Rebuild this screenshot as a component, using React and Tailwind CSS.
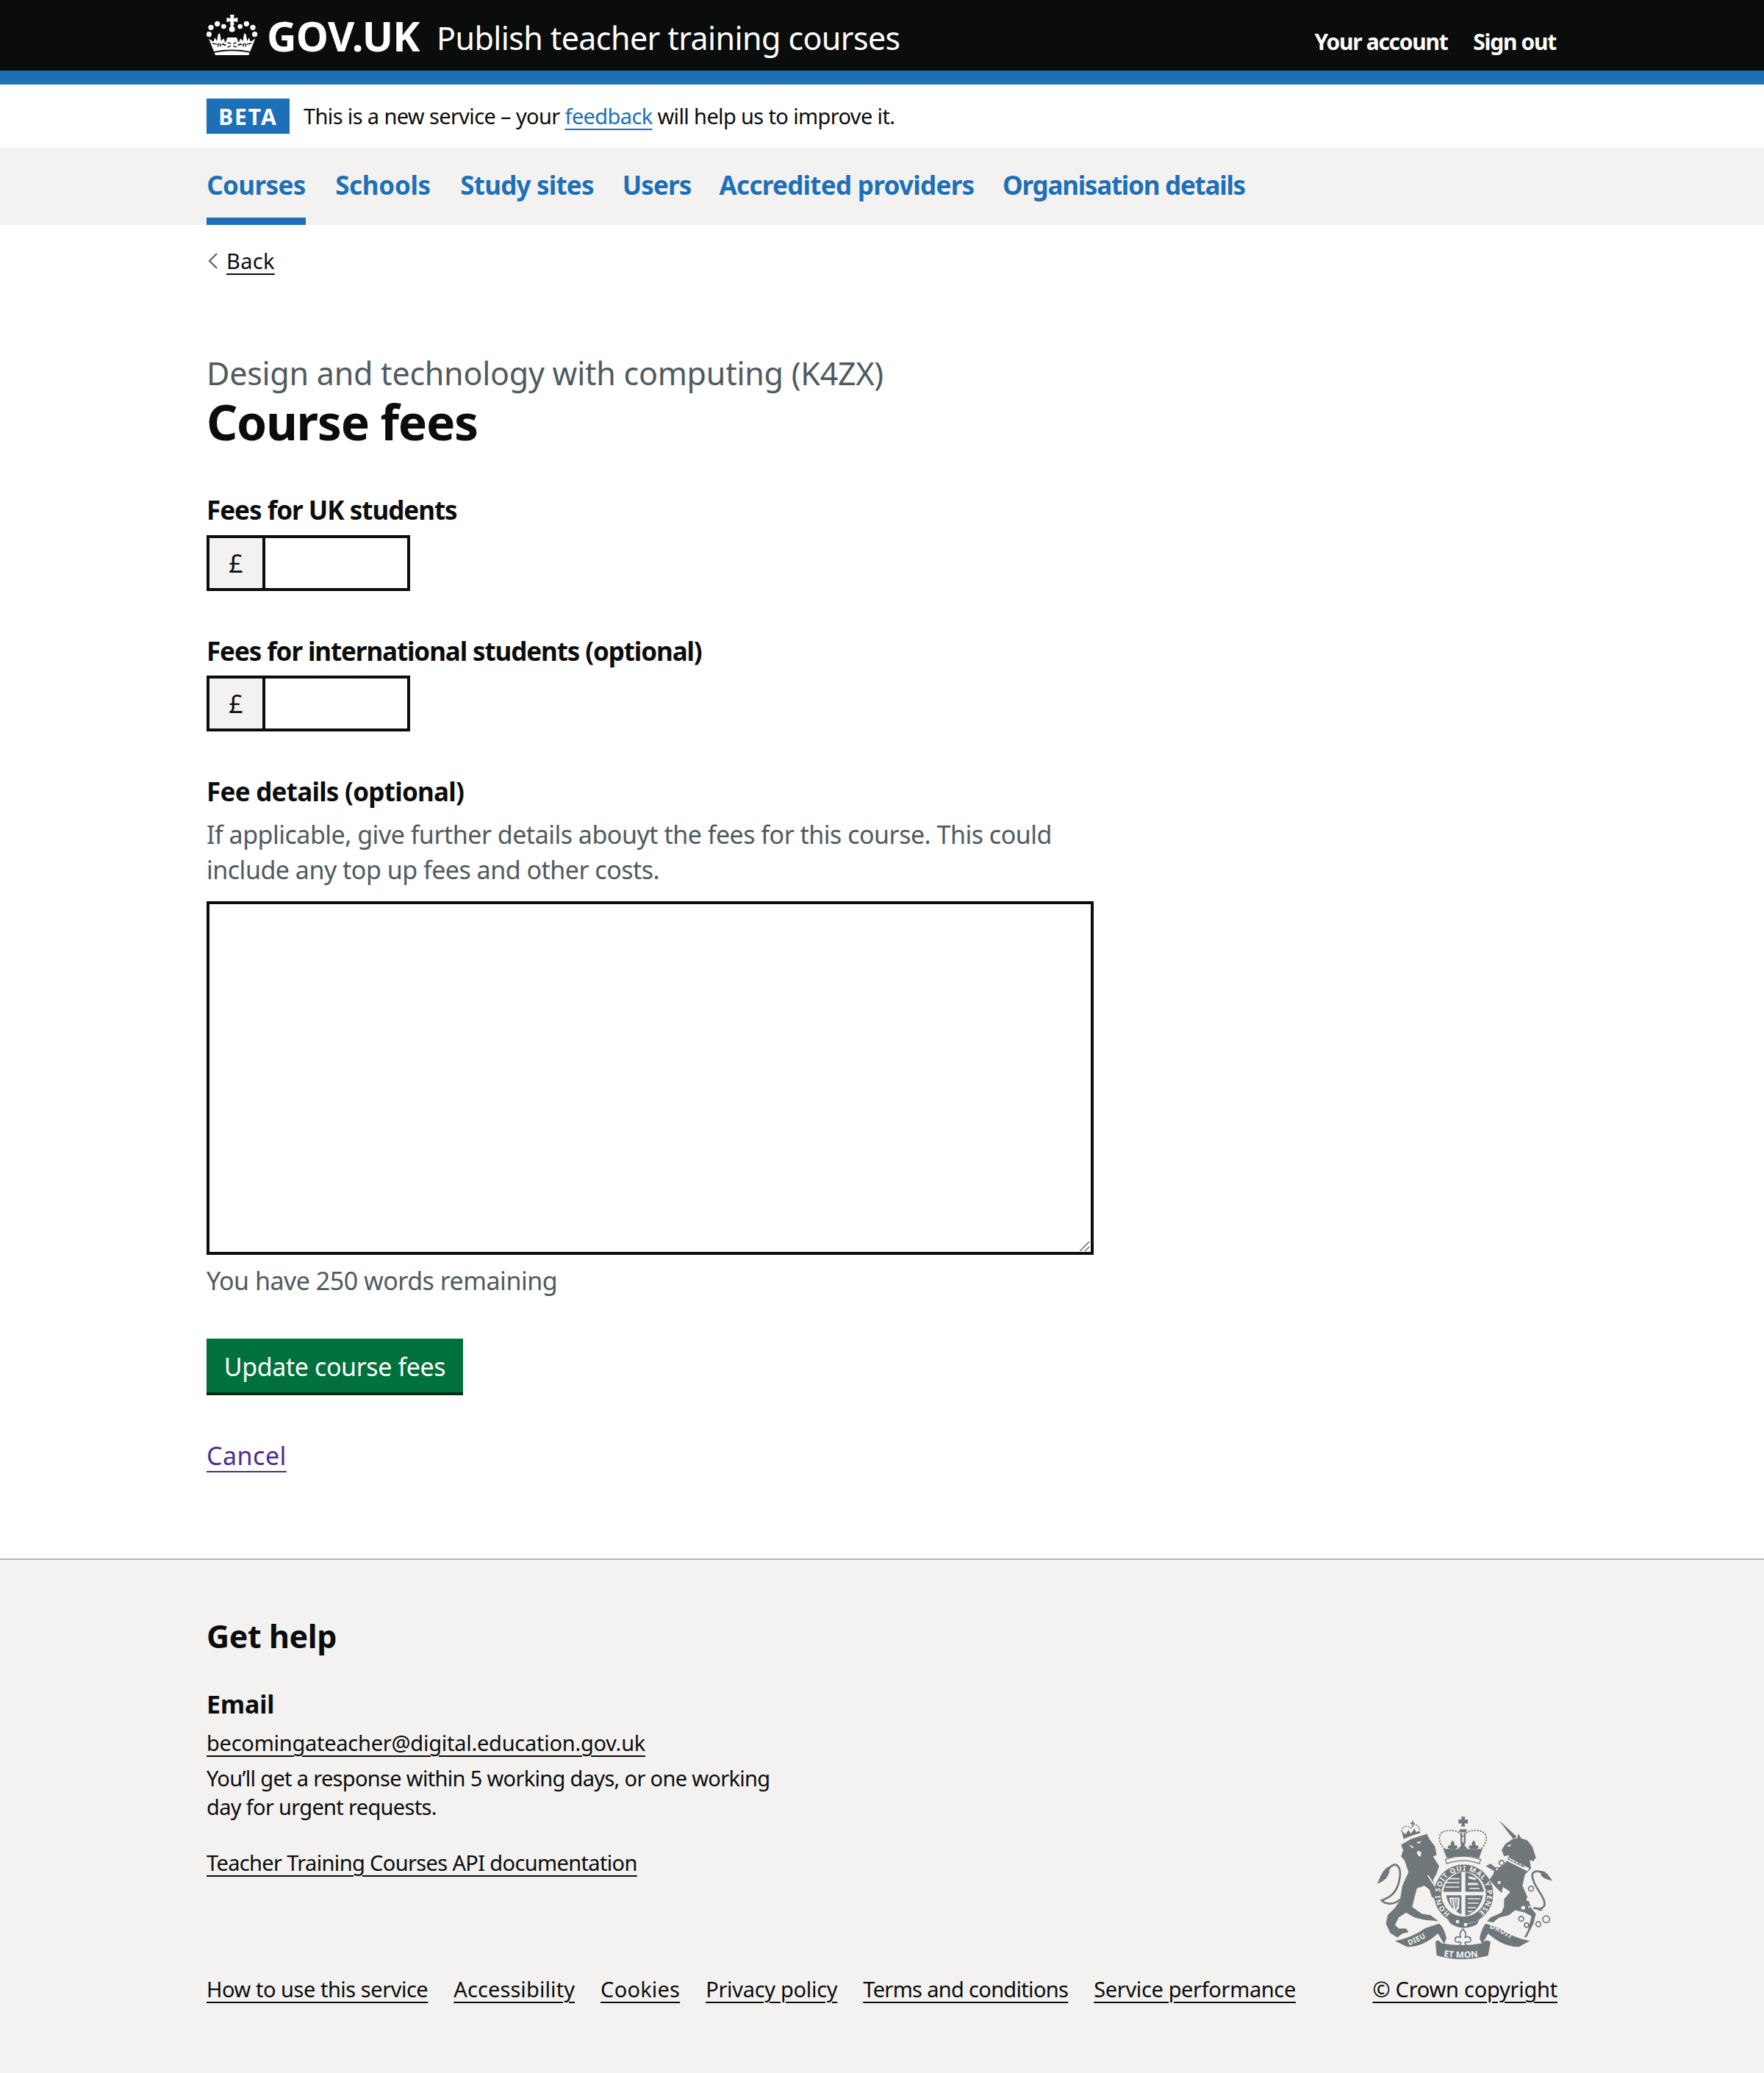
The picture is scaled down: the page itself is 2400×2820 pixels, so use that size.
import React from "react";

const navItems = [
  { label: "Courses", cls: "w-[135px] tracking-[-0.6px]", active: true },
  { label: "Schools", cls: "w-[132px] tracking-[-0.3px]" },
  { label: "Study sites", cls: "w-[182px] tracking-[-0.8px]" },
  { label: "Users", cls: "w-[93px] tracking-[-0.9px]" },
  { label: "Accredited providers", cls: "w-[346px] tracking-[-0.7px]" },
  { label: "Organisation details", cls: "w-[330px] tracking-[-1.25px]" },
];

const footerLinks = [
  { label: "How to use this service", cls: "tracking-[-0.47px]" },
  { label: "Accessibility", cls: "tracking-[0.1px]" },
  { label: "Cookies", cls: "tracking-[0.2px]" },
  { label: "Privacy policy", cls: "tracking-[-0.3px]" },
  { label: "Terms and conditions", cls: "tracking-[-0.68px]" },
  { label: "Service performance", cls: "tracking-[-0.36px]" },
];

function CrownLogo() {
  return (
    <svg viewBox="18 15 207 165" className="w-[69px] h-[55px] fill-white" aria-hidden="true">
      <path d="M114 15h17l-2 15 16-3v18l-16-3 2 16h-17l2-16-16 3V27l16 3z" />
      <path d="M122 54c7 8 12 15 12 22 0 6-5 10-12 10s-12-4-12-10c0-7 5-14 12-22z" />
      <circle cx="88" cy="63" r="10" />
      <circle cx="62" cy="52" r="11" />
      <circle cx="36" cy="67" r="11" />
      <circle cx="28" cy="95" r="11" />
      <circle cx="155" cy="63" r="10" />
      <circle cx="181" cy="52" r="11" />
      <circle cx="207" cy="67" r="11" />
      <circle cx="215" cy="95" r="11" />
      <path d="M27 112c8 6 15 12 20 12l5-16 8 14 5-27 7-5 6 32 10-10 7 18 8-22h38l8 22 7-18 10 10 6-32 7 5 5 27 8-14 5 16c5 0 12-6 20-12l-21 53c-46-10-101-10-148 0z" />
      <path d="M50 170c45-10 100-10 144 0l-4 10H54z" />
      <g stroke="#0b0c0c" strokeWidth="4" fill="none">
        <path d="M42 132l20 4M64 146l4-14M76 146l-4-14M86 132l8 10M78 136l20 2" />
        <path d="M201 132l-20 4M179 146l-4-14M167 146l4-14M157 132l-8 10M165 136l-20 2" />
        <path d="M104 128l13 6M140 128l-13 6M104 148l13-6M140 148l-13-6" />
      </g>
    </svg>
  );
}

function RoyalCrest() {
  return (
    <svg viewBox="100 90 720 590" className="w-[240px] h-[197px] fill-[#6f777b]" aria-hidden="true">
      <defs>
        <path id="garter" d="M400 489A96 96 0 1 1 510 489" />
        <path id="scroll-left" d="M232 618Q285 600 332 566" />
        <path id="scroll-mid" d="M366 662Q450 678 535 662" />
        <path id="scroll-right" d="M560 548Q625 570 685 622" />
      </defs>

      {/* lion */}
      <g transform="translate(90 90)">
        <path d="M110 118L150 95 215 74 225 95 248 125 255 160 240 165 265 205 255 235 240 262 262 320 255 345 235 330 225 300 205 285 175 295 165 330 155 372 195 400 230 405 262 430 240 428 205 425 165 415 130 395 100 415 85 445 100 460 130 460 140 475 115 480 95 497 65 478 48 440 55 405 85 375 105 345 115 285 140 230 125 185 110 165 118 140z" />
        <path d="M105 340C85 365 45 362 30 345 60 335 85 320 98 280 108 245 112 210 88 200 75 197 62 210 55 225" fill="none" stroke="#6f777b" strokeWidth="8" />
        <path d="M65 205C35 215 25 250 12 278 30 270 50 262 60 235z" />
        <path d="M120 95L112 62 128 75 140 58 150 72 165 52 172 68 184 60 188 70C165 76 140 85 120 95z" />
        <path d="M112 62C113 42 130 38 146 48M150 50C158 30 182 30 186 62" fill="none" stroke="#6f777b" strokeWidth="6" strokeLinecap="round" strokeDasharray="0 10" />
        <path d="M148 28h6v-8h5v8h7v5h-7v12h-5V33h-6z" />
        <path d="M140 118l22 8-6 6z" fill="#f3f2f1" />
        <path d="M172 108l22-6-12 12z" fill="#f3f2f1" />
        <path d="M178 142l14 6-2 18-10-2-6-14z" fill="#f3f2f1" />
        <path d="M220 240l60 88-5 3-58-86z" fill="#f3f2f1" />
      </g>

      {/* unicorn */}
      <g transform="translate(450 90)">
        <path d="M147 16L222 85 208 95z" />
        <path d="M160 140L175 115 205 95 225 90 228 72 240 92 265 100 285 125 300 170 290 185 275 180 280 215 255 240 245 285 265 330 280 375 300 400 290 440 262 495 252 497 268 465 282 410 255 395 215 385 190 405 150 415 125 435 100 430 115 415 160 395 170 370 170 340 195 310 165 290 160 315 135 290 110 260 125 240 130 225 95 205 115 195 140 215 170 200 185 175 190 160 170 165z" />
        <path d="M290 375C320 385 345 375 332 342 315 305 285 275 285 240 288 225 310 222 322 232" fill="none" stroke="#6f777b" strokeWidth="8" />
        <path d="M318 224C345 225 355 250 368 265 350 262 335 258 322 245z" />
        <path d="M300 372l30 14-18 2z" />
        <path d="M185 168l88 46-8 12-88-44z" fill="#f3f2f1" />
        <path d="M190 172l6 12 6-6 6 12 8-6 6 12 8-6 6 12 8-5 6 10 6-4-4 8-70-34z" />
        <path d="M182 122l18-6-8 10z" fill="#f3f2f1" />
        <g fill="#f3f2f1" stroke="#6f777b" strokeWidth="5">
          <circle cx="160" cy="192" r="10" />
          <circle cx="141" cy="218" r="7" />
          <circle cx="150" cy="272" r="9" />
          <circle cx="280" cy="297" r="10" />
        </g>
        <g fill="#f3f2f1">
          <circle cx="268" cy="341" r="7" />
          <circle cx="248" cy="375" r="8" />
          <circle cx="272" cy="372" r="4" />
        </g>
        <g fill="none" stroke="#6f777b" strokeWidth="5">
          <circle cx="240" cy="420" r="10" />
          <circle cx="262" cy="446" r="9" />
          <circle cx="310" cy="442" r="10" />
          <circle cx="342" cy="422" r="14" />
        </g>
      </g>

      {/* crown */}
      <path d="M445 93h16l-2 13 13-2v18l-13-2 2 14h-16l2-14-13 2v-18l13 2z" />
      <path d="M385 232C345 200 345 150 395 150 420 148 440 155 452 175 464 155 484 148 509 150 559 150 559 200 519 232" fill="none" stroke="#6f777b" strokeWidth="7" strokeLinecap="round" strokeDasharray="0 12" />
      <path d="M438 145h29v12h-29zM442 160h7v42h-7zM456 160h7v42h-7z" />
      <path d="M372 225h160l-14 37c-44-10-88-10-132 0z" />
      <path d="M410 190c8 8 10 16 6 22 6-4 14-2 14 5 0 6-8 9-14 8h-12c-6 1-14-2-14-8 0-7 8-9 14-5-4-6-2-14 6-22z" />
      <path d="M452 196l10 10-4 4 14 15h-40l14-15-4-4z" />
      <path d="M496 190c8 8 10 16 6 22 6-4 14-2 14 5 0 6-8 9-14 8h-12c-6 1-14-2-14-8 0-7 8-9 14-5-4-6-2-14 6-22z" />
      <path d="M380 268c48-18 96-18 145 0l-6 17c-44-16-88-16-133 0z" fill="#f3f2f1" stroke="#6f777b" strokeWidth="4" />

      {/* garter and shield */}
      <circle cx="455" cy="410" r="106" fill="none" stroke="#6f777b" strokeWidth="30" />
      <circle cx="455" cy="408" r="90" fill="#f3f2f1" />
      <path d="M372 400h74v-80c-40 8-68 38-74 80zM462 320v80h76c-6-42-36-72-76-80zM462 414v84c38-10 66-44 72-84zM384 414c6 38 30 64 62 78v-78z" />
      <g fill="#f3f2f1">
        <path d="M392 344h46v5h-46zM384 360h54v5h-54zM380 378h58v5h-58z" />
        <path d="M474 336l34 8-6 8-26-6zM472 364h40l4 8h-44zM478 384h42v5h-42z" />
        <path d="M472 426h50v5h-50zM472 444h44v5h-44zM472 462h32v5h-32zM472 478h20v5h-20z" />
        <path d="M396 424h42l-2 42-12 16c-14-14-24-32-28-58z" />
      </g>
      <path d="M406 430l6 36M417 428l7 44M428 428l-1 36" stroke="#6f777b" strokeWidth="4" fill="none" />
      <text fontSize="29" fontWeight="700" fill="#f3f2f1" fontFamily="Noto Sans, sans-serif" letterSpacing="0.5">
        <textPath href="#garter" textLength="478">HONI SOIT QUI MAL Y PENSE</textPath>
      </text>
      <path d="M385 500c40 36 100 42 135 10l-10 22c-36 22-82 20-112-6z" />
      <circle cx="430" cy="522" r="7" fill="#f3f2f1" />
      <circle cx="463" cy="534" r="7" fill="#f3f2f1" />

      {/* motto scrolls */}
      <path d="M175 600Q240 590 300 548L355 530Q375 545 385 590L375 612Q362 590 350 570 290 625 225 625z" />
      <path d="M340 605Q350 590 365 610 450 625 530 610 545 590 565 605L555 660Q450 690 345 660z" />
      <path d="M725 600Q660 590 600 548L545 530Q530 545 520 590L530 612Q545 590 555 570 615 625 680 625z" />
      <text fontSize="30" fontWeight="700" fill="#f3f2f1" fontFamily="Noto Sans, sans-serif" letterSpacing="1">
        <textPath href="#scroll-left">DIEU</textPath>
      </text>
      <text fontSize="36" fontWeight="700" fill="#f3f2f1" fontFamily="Noto Sans, sans-serif">
        <textPath href="#scroll-mid" startOffset="4%">ET MON</textPath>
      </text>
      <text fontSize="30" fontWeight="700" fill="#f3f2f1" fontFamily="Noto Sans, sans-serif" letterSpacing="1">
        <textPath href="#scroll-right">DROIT</textPath>
      </text>
      <path d="M452 552c11 10 14 24 8 36 9-8 24-5 24 7 0 10-10 14-16 9l-8 4 6 14h-28l6-14-8-4c-6 5-16 1-16-9 0-12 15-15 24-7-6-12-3-26 8-36z" fill="none" stroke="#6f777b" strokeWidth="5" />
    </svg>
  );
}

function FeeInput() {
  return (
    <div className="flex w-[277px] h-[76px] border-4 border-[#0b0c0c]">
      <div className="w-[76px] shrink-0 bg-[#f3f2f1] border-r-4 border-[#0b0c0c] flex items-center justify-center text-[34px] text-[#0b0c0c]">
        £
      </div>
      <input type="text" className="flex-1 min-w-0 bg-white outline-none" />
    </div>
  );
}

export default function App() {
  return (
    <div className="min-h-[2820px] bg-white font-['Noto_Sans',sans-serif] text-[#0b0c0c]">
      {/* Header */}
      <header className="h-[115px] bg-[#0b0c0c] border-b-[19px] border-[#1d70b8]">
        <div className="w-[1838px] mx-auto h-full flex items-start justify-between text-white">
          <div className="flex items-start pt-[20px]">
            <CrownLogo />
            <span className="ml-[13px] -mt-[7px] w-[209px] text-[56px] leading-[70px] font-bold tracking-[-0.7px] whitespace-nowrap">GOV.UK</span>
            <span className="ml-[22px] mt-[2px] w-[632px] text-[43px] leading-[60px] tracking-[-0.6px] whitespace-nowrap">Publish teacher training courses</span>
          </div>
          <div className="flex gap-[35px] pt-[37px] pr-[2px] text-[30px] leading-[40px] font-bold tracking-[-1.3px]">
            <a href="#">Your account</a>
            <a href="#">Sign out</a>
          </div>
        </div>
      </header>

      {/* Beta banner */}
      <div className="h-[86px] w-[1838px] mx-auto flex items-center">
        <strong className="w-[113px] h-[48px] bg-[#1d70b8] text-white text-[30px] tracking-[2px] font-bold flex items-center justify-center">BETA</strong>
        <p className="ml-[19px] text-[29px] tracking-[-0.63px] leading-[40px]">
          This is a new service – your{" "}
          <a href="#" className="text-[#1d70b8] underline decoration-2 underline-offset-[6px]">feedback</a>{" "}
          will help us to improve it.
        </p>
      </div>

      {/* Nav */}
      <nav className="h-[105px] bg-[#f3f2f1]">
        <ul className="w-[1838px] mx-auto h-full flex gap-[39px]">
          {navItems.map((item) => (
            <li
              key={item.label}
              className={`${item.cls} h-full pt-[8px] flex items-center justify-center border-b-[10px] whitespace-nowrap text-[35px] font-bold text-[#1d70b8] ${item.active ? "border-[#1d70b8]" : "border-transparent"}`}
            >
              {item.label}
            </li>
          ))}
        </ul>
      </nav>

      <main className="w-[1838px] mx-auto">
        <div className="mt-[25px] h-[48px] flex items-center">
          <svg viewBox="0 0 14 22" className="w-[14px] h-[22px] ml-[2px] fill-none stroke-[#505a5f] stroke-2" aria-hidden="true">
            <path d="M12 1L2 11l10 10" />
          </svg>
          <a href="#" className="ml-[11px] text-[29px] tracking-[0.3px] leading-[40px] underline decoration-2 underline-offset-[6px]">Back</a>
        </div>

        <p className="mt-[105px] text-[43px] leading-[48px] tracking-[-0.25px] text-[#505a5f]">Design and technology with computing (K4ZX)</p>
        <h1 className="mt-[6px] text-[66px] leading-[70px] font-bold tracking-[-1.3px]">Course fees</h1>

        <label className="block mt-[66px] text-[35px] leading-[40px] font-bold tracking-[-1px]">Fees for UK students</label>
        <div className="mt-[14px]"><FeeInput /></div>

        <label className="block mt-[62px] text-[35px] leading-[40px] font-bold tracking-[-1.1px]">Fees for international students (optional)</label>
        <div className="mt-[13px]"><FeeInput /></div>

        <label className="block mt-[62px] text-[35px] leading-[40px] font-bold tracking-[-0.73px]">Fee details (optional)</label>
        <p className="mt-[14px] w-[1207px] text-[34px] leading-[48px] tracking-[-0.5px] text-[#505a5f]">
          If applicable, give further details abouyt the fees for this course. This could include any top up fees and other costs.
        </p>
        <div className="relative mt-[19px] w-[1207px] h-[481px]">
          <textarea className="block w-full h-full resize-none border-4 border-[#0b0c0c] outline-none bg-white" />
          <svg viewBox="0 0 14 14" className="absolute right-[5px] bottom-[5px] w-[14px] h-[14px] stroke-[#6b6b6b] stroke-[1.5] fill-none" aria-hidden="true">
            <path d="M0 14L13 1M7 14l6-6" />
          </svg>
        </div>
        <p className="mt-[11px] text-[34px] leading-[48px] tracking-[-0.5px] text-[#505a5f]">You have 250 words remaining</p>

        <button type="button" className="mt-[55px] w-[349px] h-[77px] pt-[4px] block bg-[#00703c] border-b-4 border-[#002d18] text-white text-[34px] tracking-[-0.4px] text-center">
          Update course fees
        </button>
        <a href="#" className="block w-fit mt-[58px] text-[34px] leading-[48px] tracking-[0.5px] text-[#4c2c92] underline decoration-2 underline-offset-[8px]">Cancel</a>
      </main>

      {/* Footer */}
      <footer className="mt-[116px] h-[700px] bg-[#f3f2f1] border-t-2 border-[#b1b4b6]">
        <div className="w-[1838px] mx-auto flex justify-between items-end">
          <div>
            <h2 className="mt-[74px] text-[43px] leading-[60px] font-bold tracking-[-0.4px]">Get help</h2>
            <h3 className="mt-[42px] text-[34px] leading-[40px] font-bold tracking-[-0.1px]">Email</h3>
            <a href="#" className="block mt-[13px] text-[29px] leading-[40px] tracking-[-0.25px] underline decoration-2 underline-offset-[6px]">becomingateacher@digital.education.gov.uk</a>
            <p className="mt-[8px] w-[800px] text-[29px] leading-[39px] tracking-[-0.68px]">
              You’ll get a response within 5 working days, or one working day for urgent requests.
            </p>
            <a href="#" className="block mt-[37px] text-[29px] leading-[40px] tracking-[-0.64px] underline decoration-2 underline-offset-[6px]">Teacher Training Courses API documentation</a>
            <ul className="mt-[132px] flex gap-[35px] text-[29px] leading-[40px]">
              {footerLinks.map((link) => (
                <li key={link.label} className={link.cls}>
                  <a href="#" className="underline decoration-2 underline-offset-[6px] whitespace-nowrap">{link.label}</a>
                </li>
              ))}
            </ul>
          </div>
          <div className="flex flex-col items-end">
            <div className="mr-[6px]"><RoyalCrest /></div>
            <a href="#" className="mt-[19px] text-[29px] leading-[40px] tracking-[-0.25px] underline decoration-2 underline-offset-[6px] whitespace-nowrap">© Crown copyright</a>
          </div>
        </div>
      </footer>
    </div>
  );
}
